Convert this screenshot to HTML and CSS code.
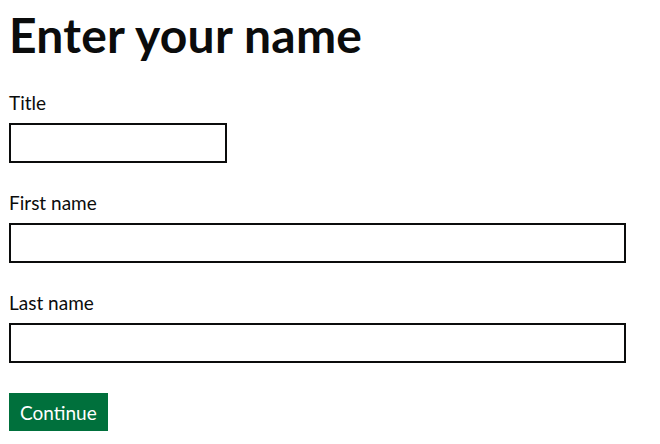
FILE: index.html
```html
<!DOCTYPE html>
<html lang="en">
<head>
<meta charset="utf-8">
<title>Enter your name</title>
<link rel="stylesheet" href="styles.css">
</head>
<body>
<main class="page">
  <h1 class="heading">Enter your name</h1>
  <form class="form">
    <div class="group">
      <label class="label" for="title">Title</label>
      <input class="input input-short" id="title" type="text">
    </div>
    <div class="group">
      <label class="label" for="first">First name</label>
      <input class="input" id="first" type="text">
    </div>
    <div class="group">
      <label class="label" for="last">Last name</label>
      <input class="input" id="last" type="text">
    </div>
    <button class="button" type="button">Continue</button>
  </form>
</main>
</body>
</html>
```

FILE: styles.css
```css
* { box-sizing: border-box; }
html, body { margin: 0; padding: 0; background: #ffffff; }
body {
  font-family: Lato, "Liberation Sans", Arial, sans-serif;
  color: #0b0c0c;
}
.page {
  padding: 10px 34px 0 9px;
}
.heading {
  margin: 0 0 31px 0;
  font-size: 48px;
  line-height: 50px;
  font-weight: 700;
  letter-spacing: 0.25px;
}
.form {
  display: flex;
  flex-direction: column;
  align-items: flex-start;
}
.group {
  display: flex;
  flex-direction: column;
  align-self: stretch;
  margin-bottom: 28px;
}
.label {
  display: block;
  font-size: 19px;
  line-height: 25px;
  margin: -1px 0 8px 0;
}
.input {
  display: block;
  width: 100%;
  height: 40px;
  margin: 0;
  padding: 5px;
  border: 2px solid #0b0c0c;
  border-radius: 0;
  background: #ffffff;
  font-family: inherit;
  font-size: 19px;
  outline: none;
}
.input-short {
  width: 218px;
}
.button {
  margin: 2px 0 0 0;
  padding: 8px 9px 7px;
  border: 2px solid transparent;
  border-radius: 0;
  background: #00703c;
  box-shadow: 0 2px 0 #002d18;
  color: #ffffff;
  font-family: inherit;
  font-size: 19px;
  line-height: 19px;
  cursor: pointer;
}
```
